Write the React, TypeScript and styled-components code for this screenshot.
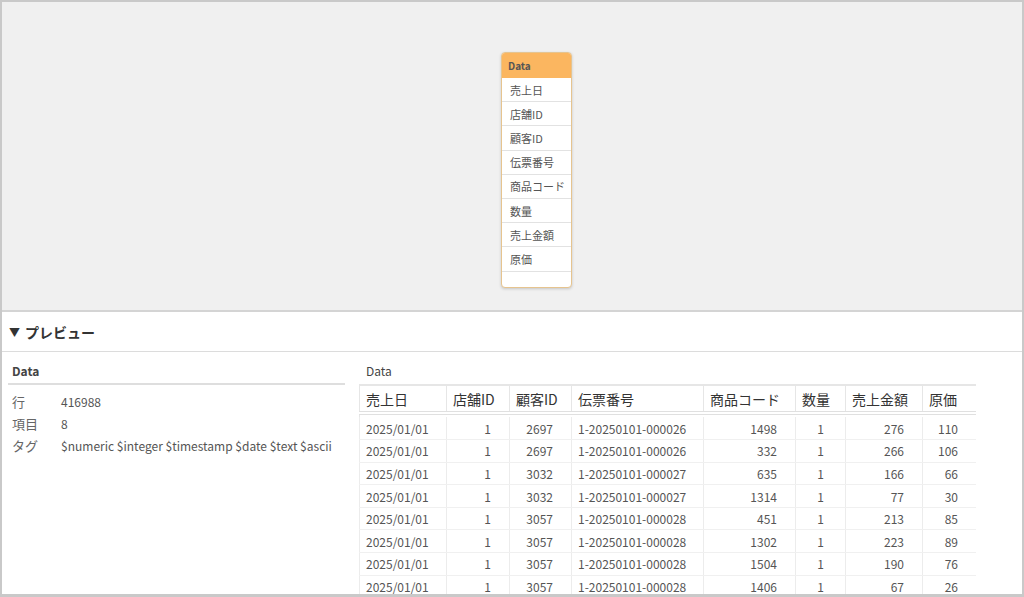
import React from 'react';
import styled, { createGlobalStyle } from 'styled-components';

const GlobalStyle = createGlobalStyle`
  html, body {
    margin: 0;
    padding: 0;
    background: #fff;
  }
  body {
    font-family: "Noto Sans CJK JP", "Noto Sans", sans-serif;
    color: #444;
  }
  * {
    box-sizing: border-box;
  }
`;

const Frame = styled.div`
  width: 1024px;
  height: 597px;
  border: 2px solid #c9c9c9;
  border-bottom-width: 3px;
  display: flex;
  flex-direction: column;
  overflow: hidden;
  background: #fff;
`;

const Canvas = styled.div`
  position: relative;
  height: 310px;
  flex: none;
  background: #f0f0f0;
  border-bottom: 2px solid #d4d4d4;
`;

const Node = styled.div`
  position: absolute;
  left: 499px;
  top: 50px;
  width: 71px;
  background: #fff;
  border: 1px solid #e6c48f;
  border-radius: 4px;
  box-shadow: 0 1px 3px rgba(0, 0, 0, 0.18);
  overflow: hidden;
`;

const NodeHeader = styled.div`
  height: 25px;
  background: #fbb660;
  padding-left: 6px;
  display: flex;
  align-items: center;
  font-size: 10px;
  font-weight: 700;
  color: #555;
`;

const NodeField = styled.div<{ $empty?: boolean }>`
  height: ${(p) => (p.$empty ? '15px' : '24.2px')};
  border-bottom: ${(p) => (p.$empty ? 'none' : '1px solid #e2e2e2')};
  padding-left: 8px;
  display: flex;
  align-items: center;
  font-size: 11px;
  color: #555;
  white-space: nowrap;
`;

const PreviewBar = styled.div`
  height: 40px;
  flex: none;
  display: flex;
  align-items: center;
  gap: 5px;
  padding-left: 7px;
  border-bottom: 1px solid #dcdcdc;
  font-size: 14px;
  font-weight: 700;
  color: #333;
`;

const Caret = styled.span`
  font-size: 11px;
  color: #333;
`;

const Body = styled.div`
  flex: 1;
  min-height: 0;
  display: flex;
  gap: 14px;
  padding: 0 0 0 6px;
  overflow: hidden;
`;

const InfoPanel = styled.div`
  width: 337px;
  flex: none;
`;

const PanelTitle = styled.div<{ $bold?: boolean }>`
  height: 32px;
  padding: 11px 0 0 ${(p) => (p.$bold ? '4px' : '7px')};
  font-size: 12px;
  font-weight: ${(p) => (p.$bold ? 700 : 400)};
  color: #444;
  line-height: 16px;
`;

const InfoTitle = styled(PanelTitle)`
  height: 33px;
  border-bottom: 2px solid #dedede;
`;

const InfoGrid = styled.div`
  display: grid;
  grid-template-columns: 49px 1fr;
  padding: 6px 0 0 4px;
  line-height: 22px;
`;

const InfoLabel = styled.div`
  font-size: 13px;
  color: #666;
`;

const InfoValue = styled.div`
  font-size: 12px;
  color: #555;
`;

const TablePanel = styled.div`
  width: 617px;
  flex: none;
  overflow: hidden;
`;

const Table = styled.table`
  border-collapse: collapse;
  table-layout: fixed;
  width: 617px;
  border-left: 1px solid #e6e6e6;
  border-right: 1px solid #e6e6e6;
  border-top: 2px solid #e6e6e6;
`;

const Th = styled.th`
  height: 28px;
  padding: 0 6px;
  text-align: left;
  font-size: 14px;
  font-weight: 400;
  color: #333;
  border-left: 1px solid #e6e6e6;
  border-bottom: 4px double #e0e0e0;
  white-space: nowrap;
`;

const Td = styled.td<{ $align: 'left' | 'right' | 'center' }>`
  height: 22.6px;
  padding: ${(p) => (p.$align === 'right' ? '0 18px 0 6px' : '0 6px')};
  text-align: ${(p) => p.$align};
  font-size: 12px;
  color: #555;
  border-left: 1px solid #ececec;
  border-bottom: 1px solid #f0f0f0;
  white-space: nowrap;
`;

const SpacerRow = styled.tr`
  height: 4px;
`;

type Col = { name: string; width: number; align: 'left' | 'right' | 'center' };

const columns: Col[] = [
  { name: '売上日', width: 87, align: 'left' },
  { name: '店舗ID', width: 63, align: 'right' },
  { name: '顧客ID', width: 62, align: 'right' },
  { name: '伝票番号', width: 132, align: 'left' },
  { name: '商品コード', width: 92, align: 'right' },
  { name: '数量', width: 50, align: 'center' },
  { name: '売上金額', width: 77, align: 'right' },
  { name: '原価', width: 54, align: 'right' },
];

const rows: (string | number)[][] = [
  ['2025/01/01', 1, 2697, '1-20250101-000026', 1498, 1, 276, 110],
  ['2025/01/01', 1, 2697, '1-20250101-000026', 332, 1, 266, 106],
  ['2025/01/01', 1, 3032, '1-20250101-000027', 635, 1, 166, 66],
  ['2025/01/01', 1, 3032, '1-20250101-000027', 1314, 1, 77, 30],
  ['2025/01/01', 1, 3057, '1-20250101-000028', 451, 1, 213, 85],
  ['2025/01/01', 1, 3057, '1-20250101-000028', 1302, 1, 223, 89],
  ['2025/01/01', 1, 3057, '1-20250101-000028', 1504, 1, 190, 76],
  ['2025/01/01', 1, 3057, '1-20250101-000028', 1406, 1, 67, 26],
];

const fields = ['売上日', '店舗ID', '顧客ID', '伝票番号', '商品コード', '数量', '売上金額', '原価'];

export default function App() {
  return (
    <Frame>
      <GlobalStyle />
      <Canvas>
        <Node>
          <NodeHeader>Data</NodeHeader>
          {fields.map((f) => (
            <NodeField key={f}>{f}</NodeField>
          ))}
          <NodeField $empty />
        </Node>
      </Canvas>

      <PreviewBar>
        <Caret>▼</Caret>
        プレビュー
      </PreviewBar>

      <Body>
        <InfoPanel>
          <InfoTitle $bold>Data</InfoTitle>
          <InfoGrid>
            <InfoLabel>行</InfoLabel>
            <InfoValue>416988</InfoValue>
            <InfoLabel>項目</InfoLabel>
            <InfoValue>8</InfoValue>
            <InfoLabel>タグ</InfoLabel>
            <InfoValue>$numeric $integer $timestamp $date $text $ascii</InfoValue>
          </InfoGrid>
        </InfoPanel>

        <TablePanel>
          <PanelTitle>Data</PanelTitle>
          <Table>
            <colgroup>
              {columns.map((c) => (
                <col key={c.name} style={{ width: c.width }} />
              ))}
            </colgroup>
            <thead>
              <tr>
                {columns.map((c) => (
                  <Th key={c.name}>{c.name}</Th>
                ))}
              </tr>
            </thead>
            <tbody>
              <SpacerRow />
              {rows.map((r, i) => (
                <tr key={i}>
                  {r.map((v, j) => (
                    <Td key={j} $align={columns[j].align}>
                      {v}
                    </Td>
                  ))}
                </tr>
              ))}
            </tbody>
          </Table>
        </TablePanel>
      </Body>
    </Frame>
  );
}
